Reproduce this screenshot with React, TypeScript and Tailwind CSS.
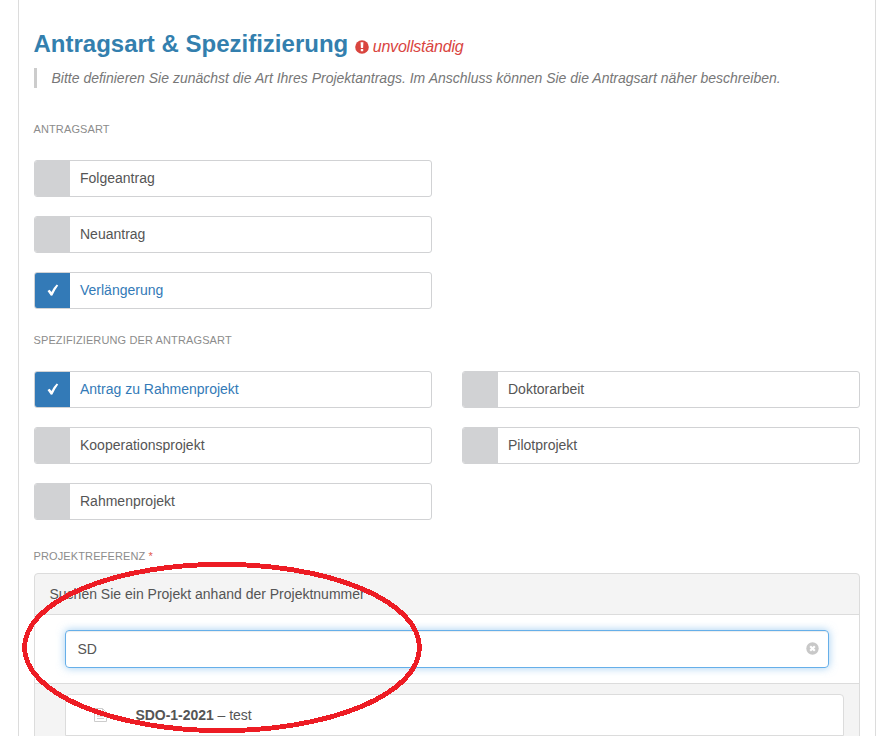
import React from "react";

function Check() {
  return (
    <svg className="relative -top-px" width="14" height="14" viewBox="0 0 14 14" fill="#fff">
      <path d="M1.5 8.1 L3.6 6.7 L5.5 9 Q7.8 4.4 10.7 1.6 L12.2 2.5 Q8.8 7 6.4 12.6 L4.9 12.8 Z" />
    </svg>
  );
}

function Option({ label, checked = false }: { label: string; checked?: boolean }) {
  return (
    <div className="flex h-[37px] w-[398px] overflow-hidden rounded-[3px] border border-[#d1d2d4] bg-white">
      <div
        className={
          checked
            ? "flex w-[35px] items-center justify-center bg-[#337ab7]"
            : "w-[35px] bg-[#d1d2d4]"
        }
      >
        {checked && <Check />}
      </div>
      <div className={checked ? "pl-2.5 leading-[34px] text-[#337ab7]" : "pl-2.5 leading-[34px] text-[#555]"}>
        {label}
      </div>
    </div>
  );
}

function Label({ children }: { children: React.ReactNode }) {
  return <div className="-ml-[0.5px] h-4 text-[11px] leading-4 tracking-[0.12px] text-[#8c8c8c]">{children}</div>;
}

export default function App() {
  return (
    <div className="relative h-[736px] w-[889px] overflow-hidden bg-white font-['Liberation_Sans',Arial,sans-serif] text-[14px] text-[#555]">
      <div className="ml-[18px] h-[736px] w-[858px] border-x border-[#dcdcdc] pl-[15px]">
        <header className="-ml-[0.5px] flex h-[68px] items-baseline pt-[28px]">
          <h1 className="text-[24px] font-bold leading-8 text-[#337fae]">Antragsart &amp; Spezifizierung</h1>
          <svg className="relative top-[1.5px] ml-[6.5px] mr-[4px]" width="14" height="14" viewBox="0 0 14 14">
            <circle cx="7" cy="7" r="6.8" fill="#d9453f" />
            <path d="M5.6 2.3h2.8L8.1 8H5.9zM5.8 9h2.4v2.3H5.8z" fill="#fff" />
          </svg>
          <span className="text-[16px] italic tracking-[-0.2px] text-[#d9453f]">unvollständig</span>
        </header>
        <blockquote className="h-5 border-l-[3px] border-[#ccc] pl-[14.5px] text-[14px] italic leading-5 text-[#777]">
          Bitte definieren Sie zunächst die Art Ihres Projektantrags. Im Anschluss können Sie die Antragsart näher beschreiben.
        </blockquote>

        <section className="pt-[33px]">
          <Label>ANTRAGSART</Label>
          <div className="flex flex-col gap-[19px] pt-[23px]">
            <Option label="Folgeantrag" />
            <Option label="Neuantrag" />
            <Option label="Verlängerung" checked />
          </div>
        </section>

        <section className="pt-[23px]">
          <Label>SPEZIFIZIERUNG DER ANTRAGSART</Label>
          <div className="grid w-[826px] grid-cols-2 gap-x-[30px] gap-y-[19px] pt-[23px]">
            <Option label="Antrag zu Rahmenprojekt" checked />
            <Option label="Doktorarbeit" />
            <Option label="Kooperationsprojekt" />
            <Option label="Pilotprojekt" />
            <Option label="Rahmenprojekt" />
          </div>
        </section>

        <section className="pt-[28px]">
          <Label>
            PROJEKTREFERENZ <span className="text-[#e2584c]">*</span>
          </Label>
          <div className="mt-[9px] h-[180px] w-[826px] rounded-t-[4px] border border-[#dcdcdc] bg-[#f4f4f4]">
            <div className="h-[41px] border-b border-[#dcdcdc] pl-[14.5px] leading-10">
              Suchen Sie ein Projekt anhand der Projektnummer
            </div>
            <div className="h-[69px] border-b border-[#dcdcdc] bg-white px-[30px] pt-[15px]">
              <div className="flex h-[38px] items-center justify-between rounded-[4px] border border-[#66afe9] pl-[11.5px] pr-[9px] shadow-[inset_0_1px_1px_rgba(0,0,0,0.075),0_0_8px_rgba(102,175,233,0.6)]">
                <span>SD</span>
                <svg className="relative -top-[0.5px]" width="13" height="13" viewBox="0 0 13 13">
                  <circle cx="6.5" cy="6.5" r="6.2" fill="#c8c8c8" />
                  <path d="M4.2 4.2l4.6 4.6M8.8 4.2L4.2 8.8" stroke="#fff" strokeWidth="2.2" />
                </svg>
              </div>
            </div>
            <div className="ml-[30px] mt-[10px] flex h-[42px] w-[779px] items-center rounded-t-[4px] border border-[#dcdcdc] bg-white pl-[28px]">
              <svg width="13" height="14" viewBox="0 0 13 14" fill="none" stroke="#ccc">
                <path d="M.5.5h8l4 4v9H.5zM8.5.5v4h4M3 5.5h3M3 8h7M3 10.5h7" />
              </svg>
              <span className="ml-[28.5px] tracking-[-0.04px]">
                <b>SDO-1-2021</b> – test
              </span>
            </div>
          </div>
        </section>
      </div>
      <svg className="pointer-events-none absolute inset-0" width="889" height="736" viewBox="0 0 889 736">
        <ellipse cx="222" cy="647.5" rx="197.5" ry="83.2" fill="none" stroke="#ed1c24" strokeWidth="4.9" shapeRendering="crispEdges" />
      </svg>
    </div>
  );
}
